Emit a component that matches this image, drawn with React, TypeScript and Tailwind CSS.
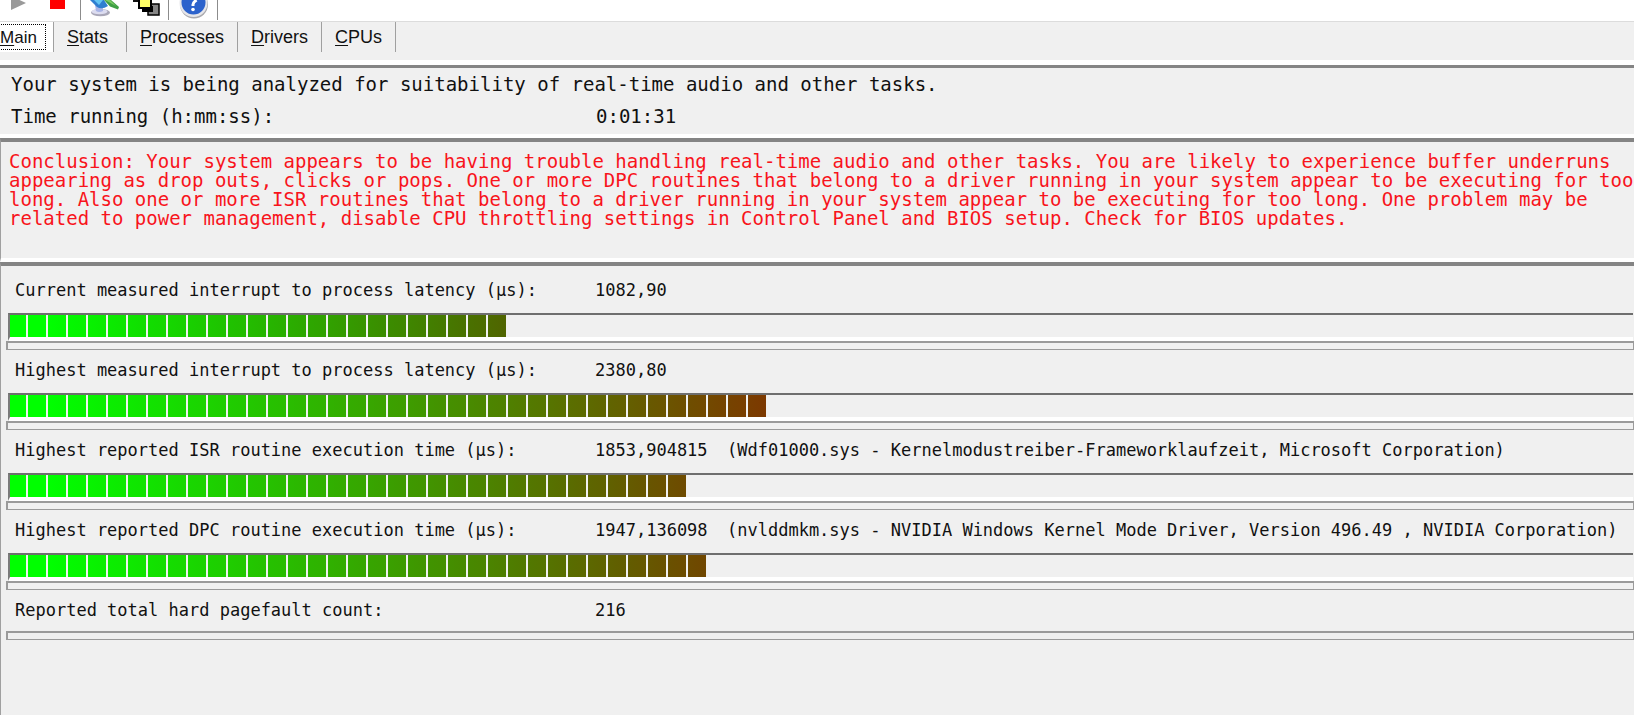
import React from "react";

const tabs = ["Stats", "Processes", "Drivers", "CPUs"];

type Rgb = [number, number, number];
type Level = { segments: number; end: Rgb };
type Metric = { label: string; value: string; detail?: string; level?: Level };

const metrics: Metric[] = [
  {
    label: "Current measured interrupt to process latency (µs):",
    value: "1082,90",
    level: { segments: 25, end: [80, 100, 0] },
  },
  {
    label: "Highest measured interrupt to process latency (µs):",
    value: "2380,80",
    level: { segments: 38, end: [124, 56, 0] },
  },
  {
    label: "Highest reported ISR routine execution time (µs):",
    value: "1853,904815",
    detail: "(Wdf01000.sys - Kernelmodustreiber-Frameworklaufzeit, Microsoft Corporation)",
    level: { segments: 34, end: [110, 74, 0] },
  },
  {
    label: "Highest reported DPC routine execution time (µs):",
    value: "1947,136098",
    detail: "(nvlddmkm.sys - NVIDIA Windows Kernel Mode Driver, Version 496.49 , NVIDIA Corporation)",
    level: { segments: 35, end: [112, 70, 0] },
  },
  { label: "Reported total hard pagefault count:", value: "216" },
];

const green: Rgb = [0, 255, 0];

function shade(end: Rgb, t: number) {
  const c = Math.max(0, Math.min(1, t));
  return `rgb(${green.map((g, k) => Math.round(g + (end[k] - g) * c)).join(",")})`;
}

function Meter({ level, label }: { level: Level; label: string }) {
  const span = level.segments - 2;
  return (
    <div
      role="img"
      aria-label={label}
      className="ml-[7px] mr-px mt-[2px] flex h-7 gap-[2px] border-b-4 border-l-2 border-t-2 border-b-white border-l-[#7b7b7b] border-t-[#6e6e6e]"
    >
      {Array.from({ length: level.segments }, (_, i) => (
        <span
          key={i}
          className={i === 0 ? "h-full w-[16px] shrink-0" : "h-full w-[18px] shrink-0"}
          style={{
            backgroundImage: `linear-gradient(to right, ${shade(level.end, (i - 2) / span)}, ${shade(level.end, (i - 1) / span)})`,
          }}
        />
      ))}
    </div>
  );
}

function Row({ metric }: { metric: Metric }) {
  return (
    <section>
      <div className="flex h-[41px] items-center pl-[14px] text-[17px] whitespace-pre">
        <span className="w-[580px] shrink-0">{metric.label}</span>
        <span className="w-[132px] shrink-0">{metric.value}</span>
        <span>{metric.detail}</span>
      </div>
      {metric.level && <Meter level={metric.level} label={metric.label} />}
      <div className="ml-[5px] h-[9px] border-2 border-b border-r border-[#9a9a9a]" />
    </section>
  );
}

function Toolbar() {
  return (
    <div className="flex h-[21px] items-start bg-white">
      <button aria-label="Start" className="ml-[11px] h-[10px] w-[15px]">
        <svg viewBox="0 0 15 10" className="block h-full w-full">
          <path d="M0 -4 L15 3 L0 10Z" fill="#9a9a9a" />
        </svg>
      </button>
      <button aria-label="Stop" className="ml-6 h-[9px] w-[15px] bg-[#ff0000]" />
      <div className="ml-[15px] h-5 w-px bg-[#8c8c8c]" />
      <button aria-label="Analyze" className="ml-[9px] h-[18px] w-[32px]">
        <svg viewBox="0 0 32 18" className="block h-full w-full">
          <ellipse cx="10.5" cy="12.6" rx="9.5" ry="3.6" fill="#a9a7b8" />
          <ellipse cx="9.5" cy="11.6" rx="8" ry="2.6" fill="#dcdcf0" />
          <path d="M5 5 L13 5 L13 11 Q9 13 6 11Z" fill="#a9b4e6" />
          <path d="M0 0 H14 L18 6 Q12 10 7 7Z" fill="#2f7fd0" />
          <path d="M4 0 H13 L9 5Z" fill="#62c4f2" />
          <path d="M14 0 L21 0 L29 7 L28 9.5 L20 6.5Z" fill="#3fa045" />
          <path d="M15 0 L20 0 L26 6Z" fill="#7ccb62" />
        </svg>
      </button>
      <button aria-label="Windows" className="ml-[11px] h-[17px] w-[28px]">
        <svg viewBox="0 0 28 17" className="block h-full w-full">
          <path d="M0 0H6V2H0Z" fill="#111" />
          <path d="M15 4H26V15H15Z" fill="#858585" stroke="#000" strokeWidth="1.5" />
          <path d="M9 6H20V12H9Z" fill="#000" />
          <path d="M6 -3H18V8H6Z" fill="#ffff66" stroke="#000" strokeWidth="2" />
        </svg>
      </button>
      <div className="ml-[7px] h-5 w-px bg-[#8c8c8c]" />
      <button aria-label="Help" className="ml-[10px] h-[19px] w-[29px]">
        <svg viewBox="0 0 29 19" className="block h-full w-full">
          <circle cx="15" cy="4.5" r="14" fill="#a9a9ae" />
          <circle cx="14.5" cy="3" r="14" fill="#e6e6ea" />
          <circle cx="14.5" cy="2.5" r="12" fill="#2c62cc" />
          <path d="M14 6V4.5Q14 2.5 17.5 0" fill="none" stroke="#fff" strokeWidth="3" />
          <circle cx="14" cy="9.5" r="1.8" fill="#fff" />
        </svg>
      </button>
      <div className="ml-[9px] h-5 w-px bg-[#8c8c8c]" />
    </div>
  );
}

function TabLabel({ text }: { text: string }) {
  return (
    <>
      <span className="underline underline-offset-2">{text[0]}</span>
      {text.slice(1)}
    </>
  );
}

export default function App() {
  return (
    <main className="flex min-h-screen flex-col overflow-hidden bg-[#f0f0f0] font-['DejaVu_Sans_Mono',monospace] text-[#111]">
      <Toolbar />
      <nav className="flex h-[39px] items-start border-t border-[#dcdcdc] font-['Liberation_Sans',sans-serif] text-[18px]">
        <div className="h-[30px] bg-white pr-[7px] pt-[2px]">
          <button className="-ml-[6px] h-[26px] w-[52px] border border-dotted border-black pl-[5px] text-left text-[17px]">
            <TabLabel text="Main" />
          </button>
        </div>
        {tabs.map((tab) => (
          <button key={tab} className="h-[30px] min-w-[73px] border-l border-[#a0a0a0] px-[13px] text-left">
            <TabLabel text={tab} />
          </button>
        ))}
        <div className="h-[30px] w-px bg-[#a0a0a0]" />
      </nav>
      <section className="border-b-4 border-t-[5px] border-white">
        <div className="flex h-[69px] flex-col border-t-[3px] border-[#848484] pl-[11px] text-[19px] leading-8">
          <p>Your system is being analyzed for suitability of real-time audio and other tasks.</p>
          <p className="flex">
            <span className="w-[585px]">Time running (h:mm:ss):</span>
            <span>0:01:31</span>
          </p>
        </div>
      </section>
      <section className="h-[124px] border-b-4 border-l border-t-4 border-b-white border-l-[#a0a0a0] border-t-[#848484] pl-2 pt-[10px] text-[19px] leading-[19px] whitespace-nowrap text-[#f8141c]">
        <p>
          Conclusion: Your system appears to be having trouble handling real-time audio and other tasks. You are likely to experience buffer underruns
          <br />
          appearing as drop outs, clicks or pops. One or more DPC routines that belong to a driver running in your system appear to be executing for too
          <br />
          long. Also one or more ISR routines that belong to a driver running in your system appear to be executing for too long. One problem may be
          <br />
          related to power management, disable CPU throttling settings in Control Panel and BIOS setup. Check for BIOS updates.
        </p>
      </section>
      <section className="grow border-l border-t-4 border-l-[#a0a0a0] border-t-[#848484] pt-1">
        {metrics.map((m) => (
          <Row key={m.label} metric={m} />
        ))}
      </section>
    </main>
  );
}
